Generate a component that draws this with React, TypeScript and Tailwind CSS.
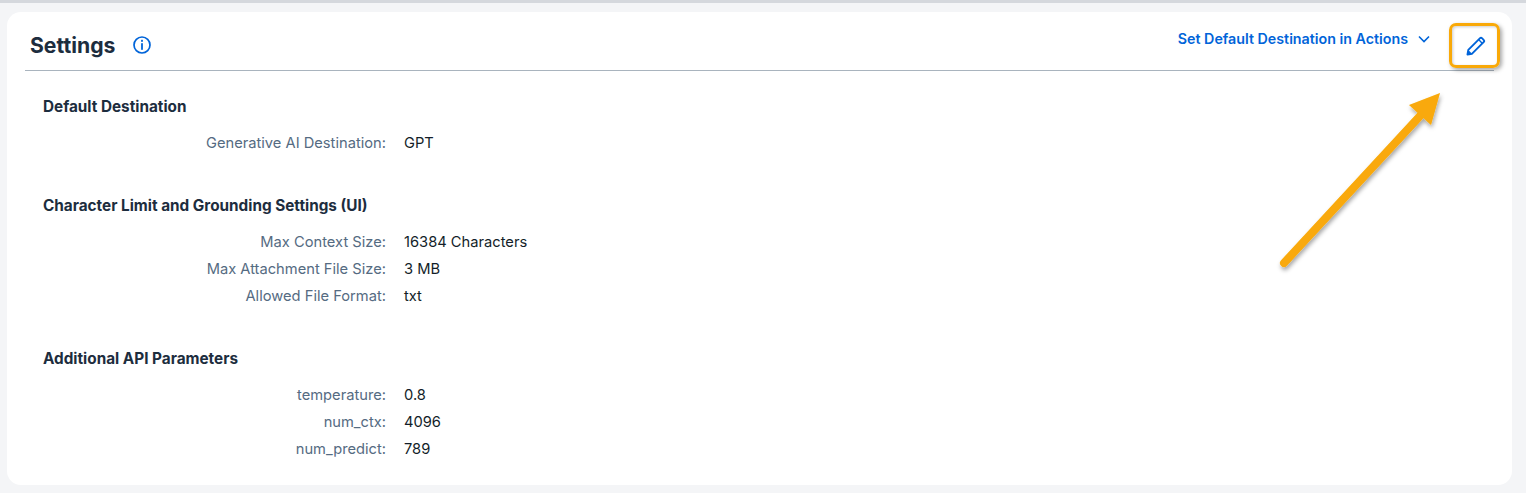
import React from 'react'

const sections = [
  {
    title: "Default Destination",
    rows: [{ label: "Generative AI Destination:", value: "GPT" }],
  },
  {
    title: "Character Limit and Grounding Settings (UI)",
    rows: [
      { label: "Max Context Size:", value: "16384 Characters" },
      { label: "Max Attachment File Size:", value: "3 MB" },
      { label: "Allowed File Format:", value: "txt" },
    ],
  },
  {
    title: "Additional API Parameters",
    rows: [
      { label: "temperature:", value: "0.8" },
      { label: "num_ctx:", value: "4096" },
      { label: "num_predict:", value: "789" },
    ],
  },
]

function App() {
  return (
    <div className="relative h-[493px] w-[1526px] overflow-hidden bg-[#f4f5f7] font-['Inter','Noto_Sans',sans-serif]">
      <div className="h-[3px] bg-[#d5d8dd]" />
      <div className="mt-[9px] ml-[7px] h-[473px] w-[1505px] rounded-[14px] bg-white">
        <div className="mx-[18px] flex h-[59px] items-start justify-between border-b border-[#a9b4be]">
          <div className="mt-[19px] flex h-[28px] items-center pl-[5px]">
            <h1 className="text-[21.2px] leading-[28px] font-bold text-[#1d2d3e]">Settings</h1>
            <svg className="ml-[18px]" width="18" height="18" viewBox="0 0 18 18" fill="none">
              <circle cx="9" cy="9" r="8" stroke="#0064d9" strokeWidth="1.7" />
              <rect x="8.1" y="3.8" width="1.8" height="2" fill="#0064d9" />
              <rect x="8.1" y="7.2" width="1.8" height="6.6" fill="#0064d9" />
            </svg>
          </div>
          <div className="flex items-start">
            <div className="mt-[17px] flex h-[20px] items-center">
              <span className="text-[14.25px] font-semibold text-[#0064d9]">Set Default Destination in Actions</span>
              <svg className="ml-[10px]" width="12" height="8" viewBox="0 0 12 8" fill="none">
                <path d="M1 1.5l5 5 5-5" stroke="#0064d9" strokeWidth="1.6" />
              </svg>
            </div>
            <div className="mt-[16px] ml-[28px] flex h-[36px] w-[36px] items-center justify-center">
              <svg width="20" height="20" viewBox="0 0 20 20" fill="none">
                <path d="M1.5 18.5l.8-4.6L13.8 2.4a1.7 1.7 0 0 1 2.4 0l1.4 1.4a1.7 1.7 0 0 1 0 2.4L6.1 17.7z" stroke="#0064d9" strokeWidth="1.9" strokeLinejoin="round" />
                <path d="M1.5 18.5l.8-4.6 3.8 3.8z" fill="#0064d9" />
                <path d="M12.6 3.6l3.8 3.8" stroke="#0064d9" strokeWidth="1.4" />
              </svg>
            </div>
          </div>
        </div>
        <div className="pt-[25px] pl-[36px]">
          {sections.map((section) => (
            <div key={section.title} className="mb-[38px] last:mb-0">
              <h2 className="text-[15.3px] leading-[22px] font-bold text-[#1d2d3e]">{section.title}</h2>
              <div className="mt-[12px]">
                {section.rows.map((row) => (
                  <div key={row.label} className="flex h-[27px] items-center text-[14.7px]">
                    <div className="w-[343px] text-right text-[#556b82]">{row.label}</div>
                    <div className="ml-[18px] text-[#131e29]">{row.value}</div>
                  </div>
                ))}
              </div>
            </div>
          ))}
        </div>
      </div>

      {/* annotation over the page */}
      <div className="absolute top-[23px] left-[1449px] h-[45px] w-[51px] rounded-[7px] border-[3.5px] border-[#f9a908] shadow-[2px_2px_4px_rgba(0,0,0,0.35),inset_1px_1px_3px_rgba(0,0,0,0.2)]" />
      <svg className="absolute top-0 left-0" width="1526" height="493" viewBox="0 0 1526 493" fill="none">
        <defs>
          <filter id="arrowShadow" x="-20%" y="-20%" width="140%" height="140%">
            <feDropShadow dx="1" dy="3" stdDeviation="2" floodColor="#000000" floodOpacity="0.35" />
          </filter>
        </defs>
        <g filter="url(#arrowShadow)">
          <path d="M1284 263L1420 116" stroke="#f9a908" strokeWidth="8" strokeLinecap="round" />
          <path d="M1440 93L1409 105L1431 125Z" fill="#f9a908" />
        </g>
      </svg>
    </div>
  )
}

export default App
